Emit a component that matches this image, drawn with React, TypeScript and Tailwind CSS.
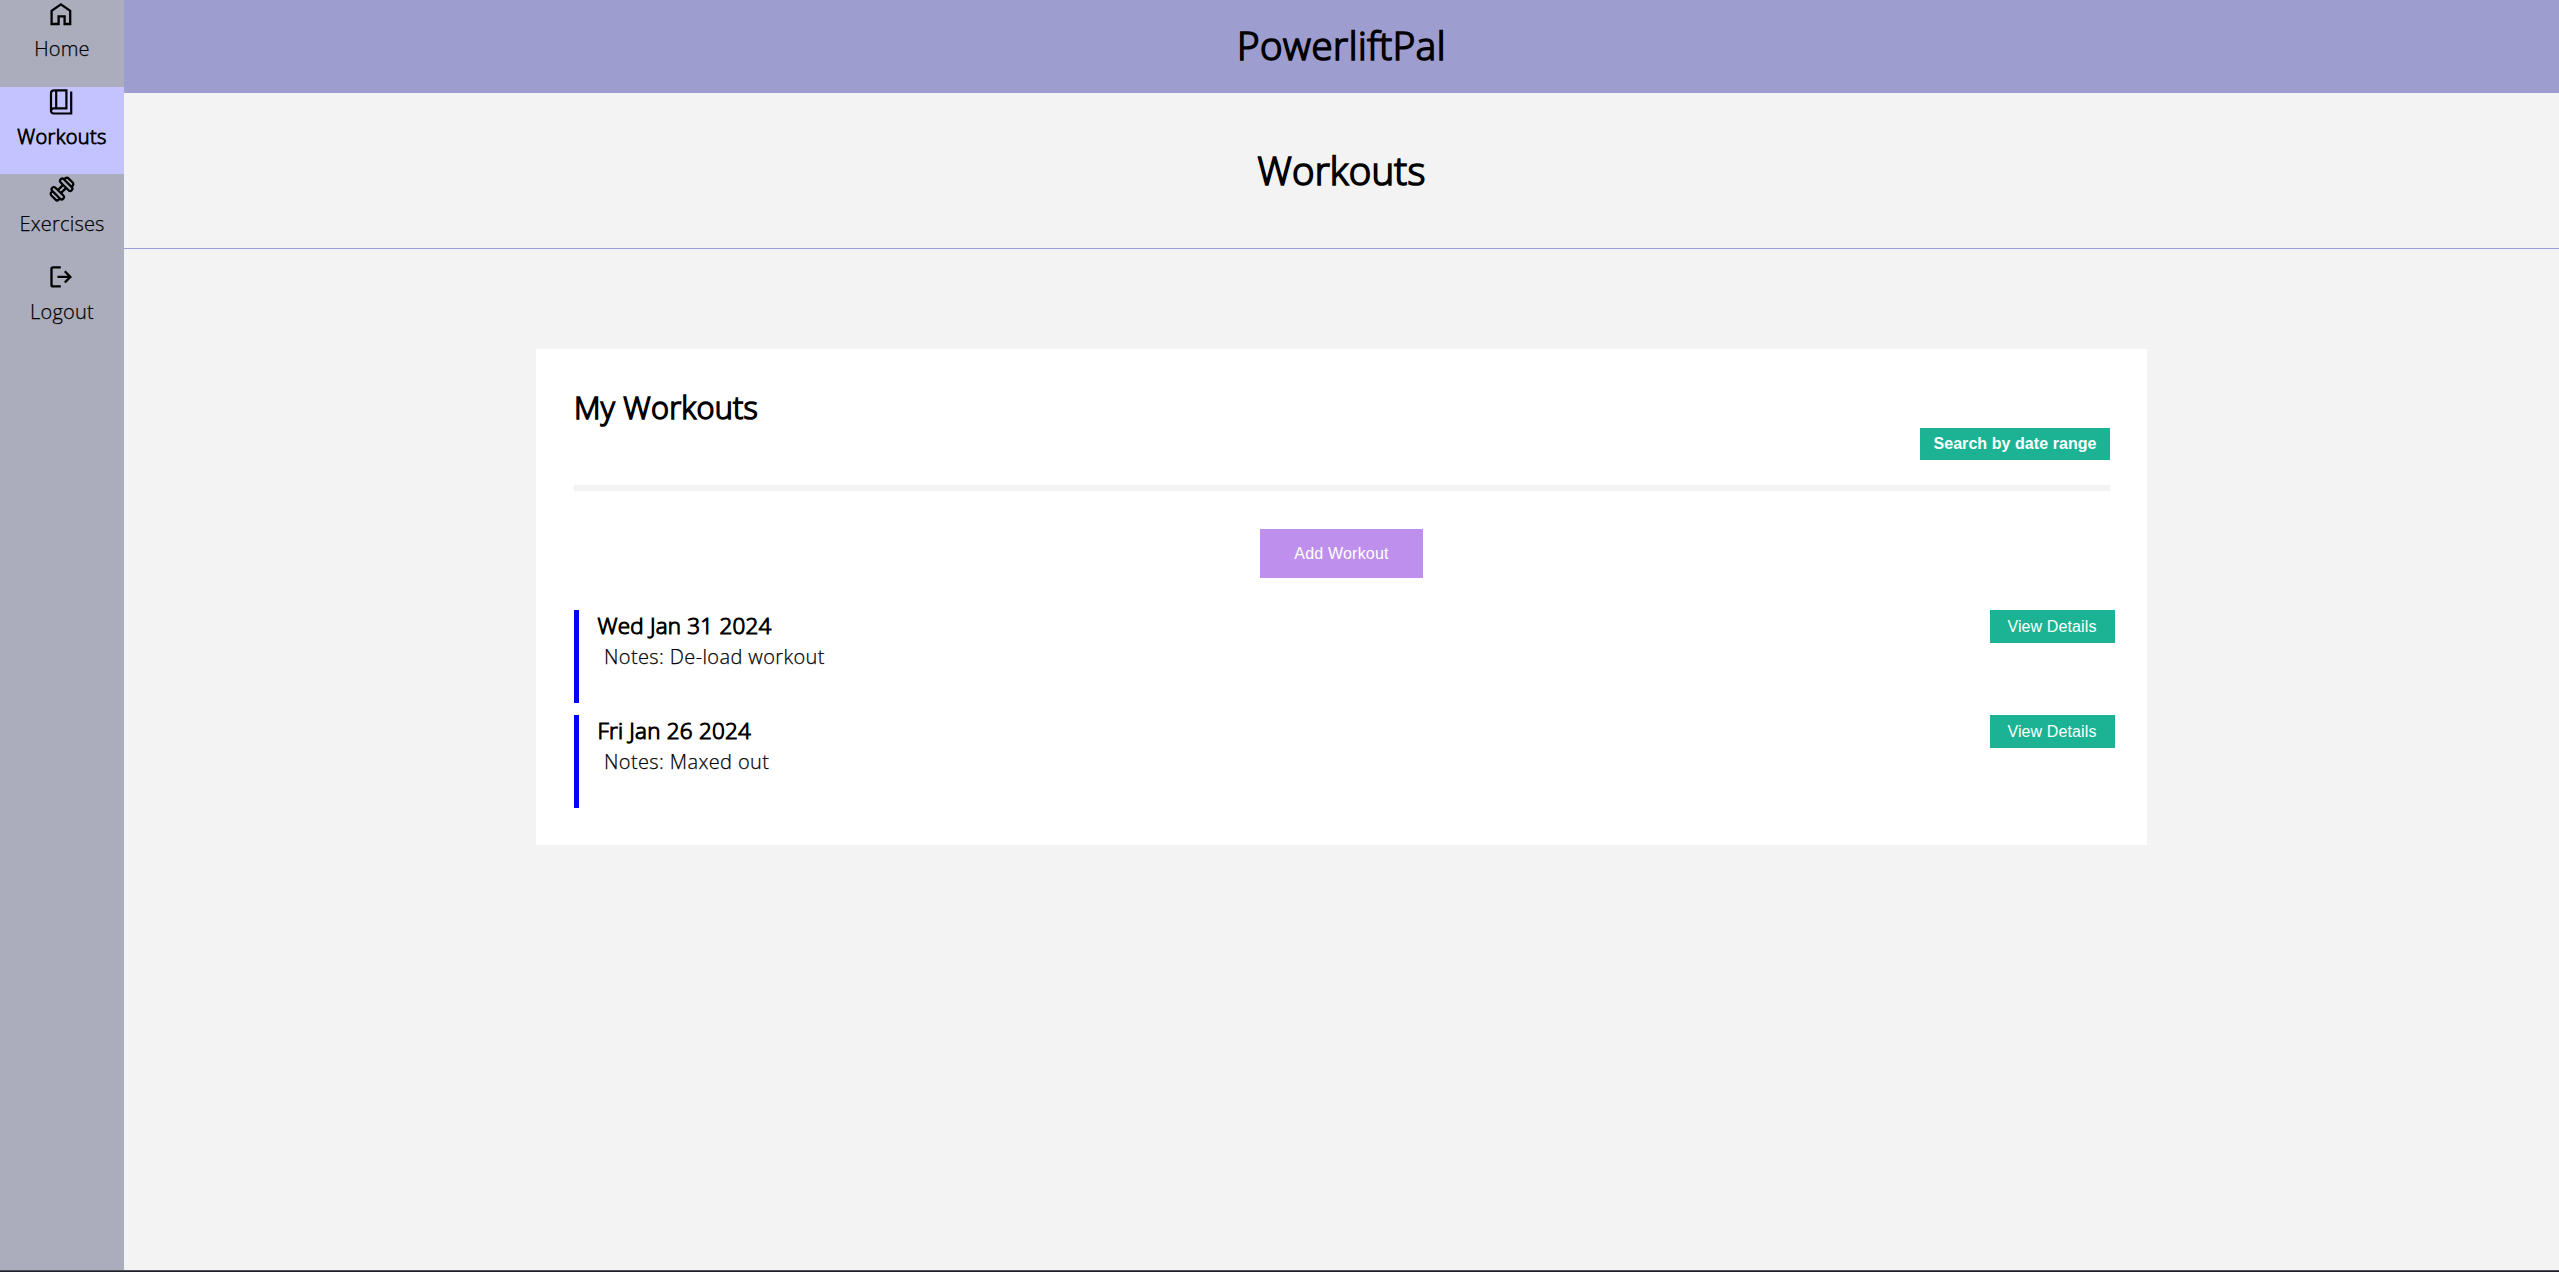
import React from "react";

function HomeIcon() {
  return (
    <svg className="mr-[2px]" width="30" height="30" viewBox="0 0 30 30" fill="none" stroke="#000" strokeWidth="2.3">
      <path d="M5.6 24V10.9L14.9 4.4l9.3 6.5V24h-5.6v-7.6h-6V24z" />
    </svg>
  );
}

function BookIcon() {
  return (
    <svg className="mr-[2px]" width="30" height="30" viewBox="0 0 30 30" fill="none" stroke="#000" strokeWidth="2.2">
      <path d="M7.6 21.3h12.8V3.3H8a3 3 0 0 0-3 3v17.8a2.6 2.6 0 0 1 2.6-2.8M5 23.8a2.6 2.6 0 0 0 2.6 2.7h17.6V4.6" />
      <path d="M10.2 3.3v18" />
    </svg>
  );
}

function DumbbellIcon() {
  return (
    <svg className="mr-[1px]" width="30" height="30" viewBox="0 0 30 30" fill="none" stroke="#000" strokeWidth="2.4">
      <g transform="translate(15 15) rotate(-45) scale(.93) translate(-15 -15)">
        <path d="M11 12.7h8M11 17.3h8" />
        <rect x="6.2" y="6.6" width="4.8" height="16.8" rx="2.4" />
        <rect x="19" y="6.6" width="4.8" height="16.8" rx="2.4" />
        <path d="M6.2 9.4H4.4a2.4 2.4 0 0 0-2.4 2.4v6.4a2.4 2.4 0 0 0 2.4 2.4h1.8M23.8 9.4h1.8a2.4 2.4 0 0 1 2.4 2.4v6.4a2.4 2.4 0 0 1-2.4 2.4h-1.8" />
      </g>
    </svg>
  );
}

function LogoutIcon() {
  return (
    <svg className="mr-[2px]" width="30" height="30" viewBox="0 0 30 30" fill="none" stroke="#000" strokeWidth="2.3">
      <path d="M14.8 5.4H7a1.5 1.5 0 0 0-1.5 1.5v16A1.5 1.5 0 0 0 7 24.4h7.8" />
      <path d="M11.5 14.9h12.8M18.8 9.3l5.6 5.6-5.6 5.6" />
    </svg>
  );
}

const nav = [
  { label: "Home", icon: <HomeIcon />, active: false },
  { label: "Workouts", icon: <BookIcon />, active: true },
  { label: "Exercises", icon: <DumbbellIcon />, active: false },
  { label: "Logout", icon: <LogoutIcon />, active: false },
];

const workouts = [
  { date: "Wed Jan 31 2024", notes: "De-load workout" },
  { date: "Fri Jan 26 2024", notes: "Maxed out" },
];

export default function App() {
  return (
    <div className="flex h-[1272px] flex-col bg-[#f3f3f3] font-['Open_Sans',sans-serif] font-light text-black">
      <div className="flex flex-1">
        <nav className="w-[124px] bg-[#abadbc]">
          {nav.map((n) => (
            <a
              key={n.label}
              className={
                n.active
                  ? "flex h-[87.2px] flex-col items-center bg-[#c3c4ff] text-[20px] leading-[26px] tracking-[0.35px] [-webkit-text-stroke:0.9px_#000]"
                  : "flex h-[87.2px] flex-col items-center text-[20px] leading-[26px] tracking-[0.2px] [-webkit-text-stroke:0.25px_#000]"
              }
            >
              {n.icon}
              <span className={n.label === "Home" ? "mt-[6px]" : "mt-[7px]"}>{n.label}</span>
            </a>
          ))}
        </nav>
        <main className="flex flex-1 flex-col">
          <header className="flex h-[93px] items-center justify-center bg-[#9d9dcf] pb-[3px]">
            <h1 className="text-[38.4px] leading-[52px] tracking-[0.6px] [-webkit-text-stroke:1.7px_#000]">PowerliftPal</h1>
          </header>
          <div className="flex h-[156px] items-center justify-center border-b border-[#9c9cd8] pb-px">
            <h2 className="text-[38.4px] leading-[52px] tracking-[0.25px] [-webkit-text-stroke:1.7px_#000]">Workouts</h2>
          </div>
          <section className="mx-auto mt-[100px] h-[496px] w-[1611px] bg-white pl-[38px] pr-[37px] pt-[35px]">
            <div className="flex h-[107px] items-start justify-between border-b-[6px] border-[#f3f3f3]">
              <h3 className="text-[30.7px] leading-[46px] tracking-[0.25px] [-webkit-text-stroke:1.5px_#000]">My Workouts</h3>
              <button className="mt-[44px] h-[32px] w-[190px] bg-[#1bb394] font-['Liberation_Sans',sans-serif] text-[16px] font-bold tracking-[0.06px] text-white">
                Search by date range
              </button>
            </div>
            <button className="ml-[686px] mt-[38px] block h-[49px] w-[163px] bg-[#bf8fee] font-['Liberation_Sans',sans-serif] text-[16px] font-normal tracking-[0.2px] text-white">
              Add Workout
            </button>
            <ul className="mt-[32px] -mr-[5px] flex flex-col gap-3">
              {workouts.map((w) => (
                <li key={w.date} className="flex h-[93px] items-start border-l-[5px] border-[#0000ff] pl-[18.5px]">
                  <div className="flex-1">
                    <h4 className="text-[22.4px] leading-[32px] tracking-[0.25px] [-webkit-text-stroke:1.1px_#000]">{w.date}</h4>
                    <p className="pl-[6.5px] text-[20px] leading-[29px] tracking-[0.38px] [-webkit-text-stroke:0.25px_#000]">
                      Notes: {w.notes}
                    </p>
                  </div>
                  <button className="h-[33px] w-[125px] bg-[#1bb394] pr-px font-['Liberation_Sans',sans-serif] text-[16px] font-normal tracking-[0.12px] text-white">
                    View Details
                  </button>
                </li>
              ))}
            </ul>
          </section>
        </main>
      </div>
      <div className="h-[2px] border-t border-[#4d4e58] bg-[#20202c]" />
    </div>
  );
}
